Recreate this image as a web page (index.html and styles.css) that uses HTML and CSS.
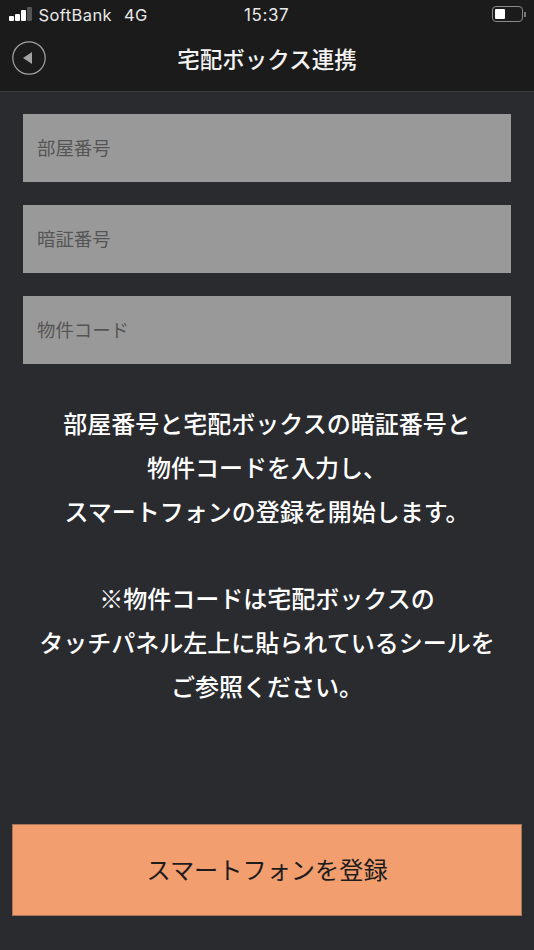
FILE: index.html
```html
<!DOCTYPE html>
<html lang="ja">
<head>
    <meta charset="UTF-8">
    <meta name="viewport" content="width=device-width, initial-scale=1.0">
    <title>宅配ボックス連携</title>
    <link rel="stylesheet" href="styles.css">
</head>
<body>
    <div class="screen">
        <header class="top">
            <div class="status">
                <div class="status-left">
                    <div class="signal">
                        <span class="bar bar1"></span>
                        <span class="bar bar2"></span>
                        <span class="bar bar3"></span>
                        <span class="bar bar4"></span>
                    </div>
                    <span class="carrier">SoftBank</span>
                    <span class="network">4G</span>
                </div>
                <span class="clock">15:37</span>
                <div class="battery">
                    <div class="battery-body"><div class="battery-level"></div></div>
                    <div class="battery-tip"></div>
                </div>
            </div>
            <div class="nav">
                <button class="back" type="button" aria-label="戻る">
                    <svg width="34" height="34" viewBox="0 0 34 34">
                        <circle cx="17" cy="17" r="16.2" fill="none" stroke="#a3a3a3" stroke-width="1.2"/>
                        <path d="M20 11 L20 23 L11 17 Z" fill="#a3a3a3"/>
                    </svg>
                </button>
                <h1>宅配ボックス連携</h1>
            </div>
        </header>
        <main class="content">
            <form class="fields">
                <input class="field" type="text" placeholder="部屋番号">
                <input class="field" type="text" placeholder="暗証番号">
                <input class="field" type="text" placeholder="物件コード">
            </form>
            <div class="notes">
                <p>部屋番号と宅配ボックスの暗証番号と</p>
                <p>物件コードを入力し、</p>
                <p>スマートフォンの登録を開始します。</p>
                <p class="blank">&nbsp;</p>
                <p>※物件コードは宅配ボックスの</p>
                <p>タッチパネル左上に貼られているシールを</p>
                <p>ご参照ください。</p>
            </div>
            <button class="submit" type="button">スマートフォンを登録</button>
        </main>
    </div>
</body>
</html>
```

FILE: styles.css
```css
* {
    box-sizing: border-box;
}
html, body {
    margin: 0;
    padding: 0;
}
body {
    font-family: "Noto Sans CJK JP", "Noto Sans", sans-serif;
    background-color: #2a2b2f;
}
.screen {
    width: 534px;
    height: 950px;
    display: flex;
    flex-direction: column;
    overflow: hidden;
}
.top {
    height: 92px;
    background-color: #1b1b1b;
    border-bottom: 1px solid #3d3e42;
    color: white;
}
.status {
    height: 30px;
    padding: 0 8px 0 9px;
    display: flex;
    align-items: center;
    justify-content: space-between;
    position: relative;
    font-family: Inter, sans-serif;
    font-size: 16.5px;
    letter-spacing: 0.4px;
    color: #e8e8e8;
}
.status-left {
    display: flex;
    align-items: center;
}
.signal {
    display: flex;
    align-items: flex-end;
    gap: 1.5px;
    height: 14px;
    margin-right: 7px;
    margin-bottom: 2px;
}
.bar {
    width: 4.5px;
    background-color: white;
    border-radius: 1px;
}
.bar1 { height: 5px; }
.bar2 { height: 7px; }
.bar3 { height: 11px; }
.bar4 { height: 14px; background-color: #555; }
.network {
    margin-left: 12px;
}
.clock {
    position: absolute;
    left: 244px;
    top: 5px;
    font-size: 17px;
    letter-spacing: 0.6px;
}
.battery {
    display: flex;
    align-items: center;
    margin-bottom: 2px;
}
.battery-body {
    width: 31px;
    height: 16px;
    border: 1px solid #8a8a8a;
    border-radius: 4px;
    padding: 2px;
}
.battery-level {
    width: 10px;
    height: 100%;
    background-color: white;
    border-radius: 1px;
}
.battery-tip {
    width: 2px;
    height: 5px;
    margin-left: 1px;
    background-color: #777;
}
.nav {
    height: 61px;
    display: flex;
    align-items: center;
    justify-content: center;
    position: relative;
}
.nav h1 {
    margin: 0 0 6px;
    font-size: 22.5px;
    font-weight: 500;
    color: #f2f2f2;
}
.back {
    position: absolute;
    left: 12px;
    top: 11px;
    width: 34px;
    height: 34px;
    padding: 0;
    border: none;
    background: none;
}
.content {
    flex: 1;
    display: flex;
    flex-direction: column;
    padding: 22px 12px 34px;
}
.fields {
    display: flex;
    flex-direction: column;
    gap: 23px;
    padding: 0 11px;
}
.field {
    width: 100%;
    height: 68px;
    padding: 0 14px 2px;
    border: none;
    border-radius: 0;
    background-color: #999999;
    font-family: inherit;
    font-size: 18.4px;
}
.field::placeholder {
    color: #555555;
    opacity: 1;
}
.notes {
    margin-top: 37px;
    text-align: center;
    color: white;
    font-size: 24px;
    font-weight: 500;
}
.notes p {
    margin: 0;
    height: 43.8px;
    line-height: 43.8px;
    white-space: nowrap;
}
.submit {
    margin-top: auto;
    height: 92px;
    width: 100%;
    background-color: #f29e6f;
    border: 1px solid #a9755a;
    color: #1c1c1c;
    font-family: inherit;
    font-size: 24.2px;
    padding: 0 0 4px;
}
```
